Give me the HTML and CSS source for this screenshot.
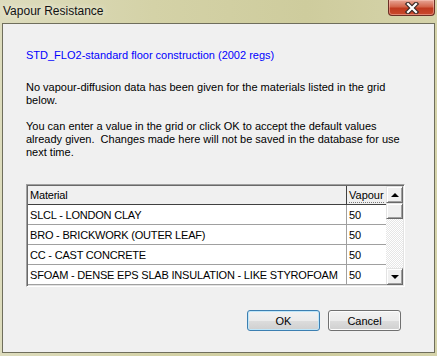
FILE: index.html
```html
<!DOCTYPE html>
<html lang="en">
<head>
  <meta charset="UTF-8">
  <title>Vapour Resistance</title>
  <link rel="stylesheet" href="styles.css">
</head>
<body>

  <div class="window">
    <div class="titlebar">
      <span class="title">Vapour Resistance</span>
      <div class="close-btn">
        <svg width="20" height="12" viewBox="0 0 20 12">
          <path d="M6 2 L14 10 M14 2 L6 10" stroke="#3a2a28" stroke-width="4.5" stroke-linecap="square"/>
          <path d="M6 2 L14 10 M14 2 L6 10" stroke="#ffffff" stroke-width="2.2" stroke-linecap="square"/>
        </svg>
      </div>
    </div>

    <div class="client">
      <p class="construction">STD_FLO2-standard floor construction (2002 regs)</p>
      <p class="msg">No vapour-diffusion data has been given for the materials listed in the grid<br>below.</p>
      <p class="msg">You can enter a value in the grid or click OK to accept the default values<br>already given.&nbsp; Changes made here will not be saved in the database for use<br>next time.</p>

      <div class="grid">
        <div class="grid-body">
          <div class="grid-row grid-head">
            <div class="cell cell-mat">Material</div>
            <div class="cell cell-val"><span class="head-val">Vapour</span></div>
          </div>
          <div class="grid-row">
            <div class="cell cell-mat">SLCL - LONDON CLAY</div>
            <div class="cell cell-val">50</div>
          </div>
          <div class="grid-row">
            <div class="cell cell-mat">BRO - BRICKWORK (OUTER LEAF)</div>
            <div class="cell cell-val">50</div>
          </div>
          <div class="grid-row">
            <div class="cell cell-mat">CC - CAST CONCRETE</div>
            <div class="cell cell-val">50</div>
          </div>
          <div class="grid-row">
            <div class="cell cell-mat">SFOAM - DENSE EPS SLAB INSULATION - LIKE STYROFOAM</div>
            <div class="cell cell-val">50</div>
          </div>
        </div>
        <div class="scrollbar">
          <div class="sb-btn"><span class="arrow-up"></span></div>
          <div class="sb-thumb"></div>
          <div class="sb-track"></div>
          <div class="sb-btn"><span class="arrow-down"></span></div>
        </div>
      </div>

      <div class="buttons">
        <button class="btn btn-default">OK</button>
        <button class="btn">Cancel</button>
      </div>
    </div>
  </div>

</body>
</html>
```

FILE: styles.css
```css
body {
  margin: 0;
  width: 437px;
  height: 356px;
  overflow: hidden;
  font-family: 'Liberation Sans', Arial, sans-serif;
  font-size: 11px;
  color: #000;
}

.window {
  width: 437px;
  height: 356px;
  display: flex;
  flex-direction: column;
  background: linear-gradient(to right, #dddcbd, #d4d2a7 35%, #cecc9d 70%, #d5d3aa);
}

.titlebar {
  height: 23px;
  display: flex;
  align-items: flex-start;
  justify-content: space-between;
  padding-left: 3px;
}

.title {
  font-size: 12px;
  margin-top: 4px;
  color: #111;
  text-shadow: 0 0 6px rgba(255, 255, 255, 0.9);
}

.close-btn {
  width: 45px;
  height: 15px;
  margin-right: 2px;
  border: 1px solid #6b2f24;
  border-top: none;
  border-radius: 0 0 4px 4px;
  background: linear-gradient(#e7a696, #d3654b 45%, #bf3a1f 55%, #c9492e);
  box-shadow: inset 0 0 0 1px rgba(255, 210, 200, 0.45);
  display: flex;
  justify-content: center;
  align-items: center;
}

.client {
  flex: 1;
  margin: 0 2px 3px 2px;
  border: 1px solid #6f6e5c;
  background: #f0f0f0;
  padding: 25px 0 0 23px;
}

p {
  margin: 0;
  line-height: 13px;
}

.construction {
  color: #0000ff;
}

.msg {
  margin-top: 19px;
}

.msg + .msg {
  margin-top: 13px;
}

.grid {
  margin-top: 25px;
  width: 375px;
  height: 99px;
  display: flex;
  border-top: 1px solid #a0a0a0;
  border-left: 1px solid #a0a0a0;
  border-bottom: 1px solid #ffffff;
  border-right: 1px solid #ffffff;
  box-shadow: inset 1px 1px 0 #696969, inset -1px -1px 0 #e3e3e3;
  padding: 1px;
}

.grid-body {
  width: 358px;
  background: #fff;
  letter-spacing: -0.2px;
}

.grid-row {
  display: flex;
  height: 20px;
  border-bottom: 1px solid #a0a0a0;
  box-sizing: border-box;
}

.grid-head {
  height: 19px;
  background: #f0f0f0;
  border-bottom-color: #404040;
}

.cell {
  padding: 4px 0 0 2px;
  box-sizing: border-box;
  white-space: nowrap;
  overflow: hidden;
}

.cell-mat {
  width: 319px;
  border-right: 1px solid #a0a0a0;
}

.grid-head .cell-mat {
  border-right-color: #404040;
}

.cell-val {
  width: 39px;
}

.grid-head .cell {
  padding-top: 3px;
}

.head-val {
  letter-spacing: 0;
  display: inline-block;
  padding-bottom: 1px;
  border-bottom: 1px dotted #7a7a7a;
}

.scrollbar {
  width: 17px;
  display: flex;
  flex-direction: column;
}

.sb-btn,
.sb-thumb {
  background: #f0f0f0;
  border-top: 1px solid #e3e3e3;
  border-left: 1px solid #e3e3e3;
  border-right: 1px solid #696969;
  border-bottom: 1px solid #696969;
  box-shadow: inset 1px 1px 0 #fff, inset -1px -1px 0 #a0a0a0;
  box-sizing: border-box;
}

.sb-btn {
  height: 17px;
  display: flex;
  justify-content: center;
  align-items: center;
}

.sb-thumb {
  height: 16px;
}

.sb-track {
  flex: 1;
  background: repeating-conic-gradient(#ffffff 0 25%, #e6e6e6 0 50%) 0 0 / 2px 2px;
}

.arrow-up {
  width: 0;
  height: 0;
  border-left: 4px solid transparent;
  border-right: 4px solid transparent;
  border-bottom: 4px solid #000;
}

.arrow-down {
  width: 0;
  height: 0;
  border-left: 4px solid transparent;
  border-right: 4px solid transparent;
  border-top: 4px solid #000;
}

.buttons {
  display: flex;
  justify-content: flex-end;
  gap: 8px;
  margin-top: 23px;
  padding-right: 33px;
}

.btn {
  width: 73px;
  height: 21px;
  font-family: 'Liberation Sans', Arial, sans-serif;
  font-size: 11px;
  color: #000;
  border: 1px solid #707070;
  border-radius: 3px;
  background: linear-gradient(#f2f2f2, #ebebeb 50%, #dddddd 50%, #cfcfcf);
  box-shadow: inset 0 0 0 1px #fcfcfc;
  padding: 0;
}

.btn-default {
  border-color: #3c7fb1;
  box-shadow: inset 0 0 0 1px #bfe6f9;
}
```
